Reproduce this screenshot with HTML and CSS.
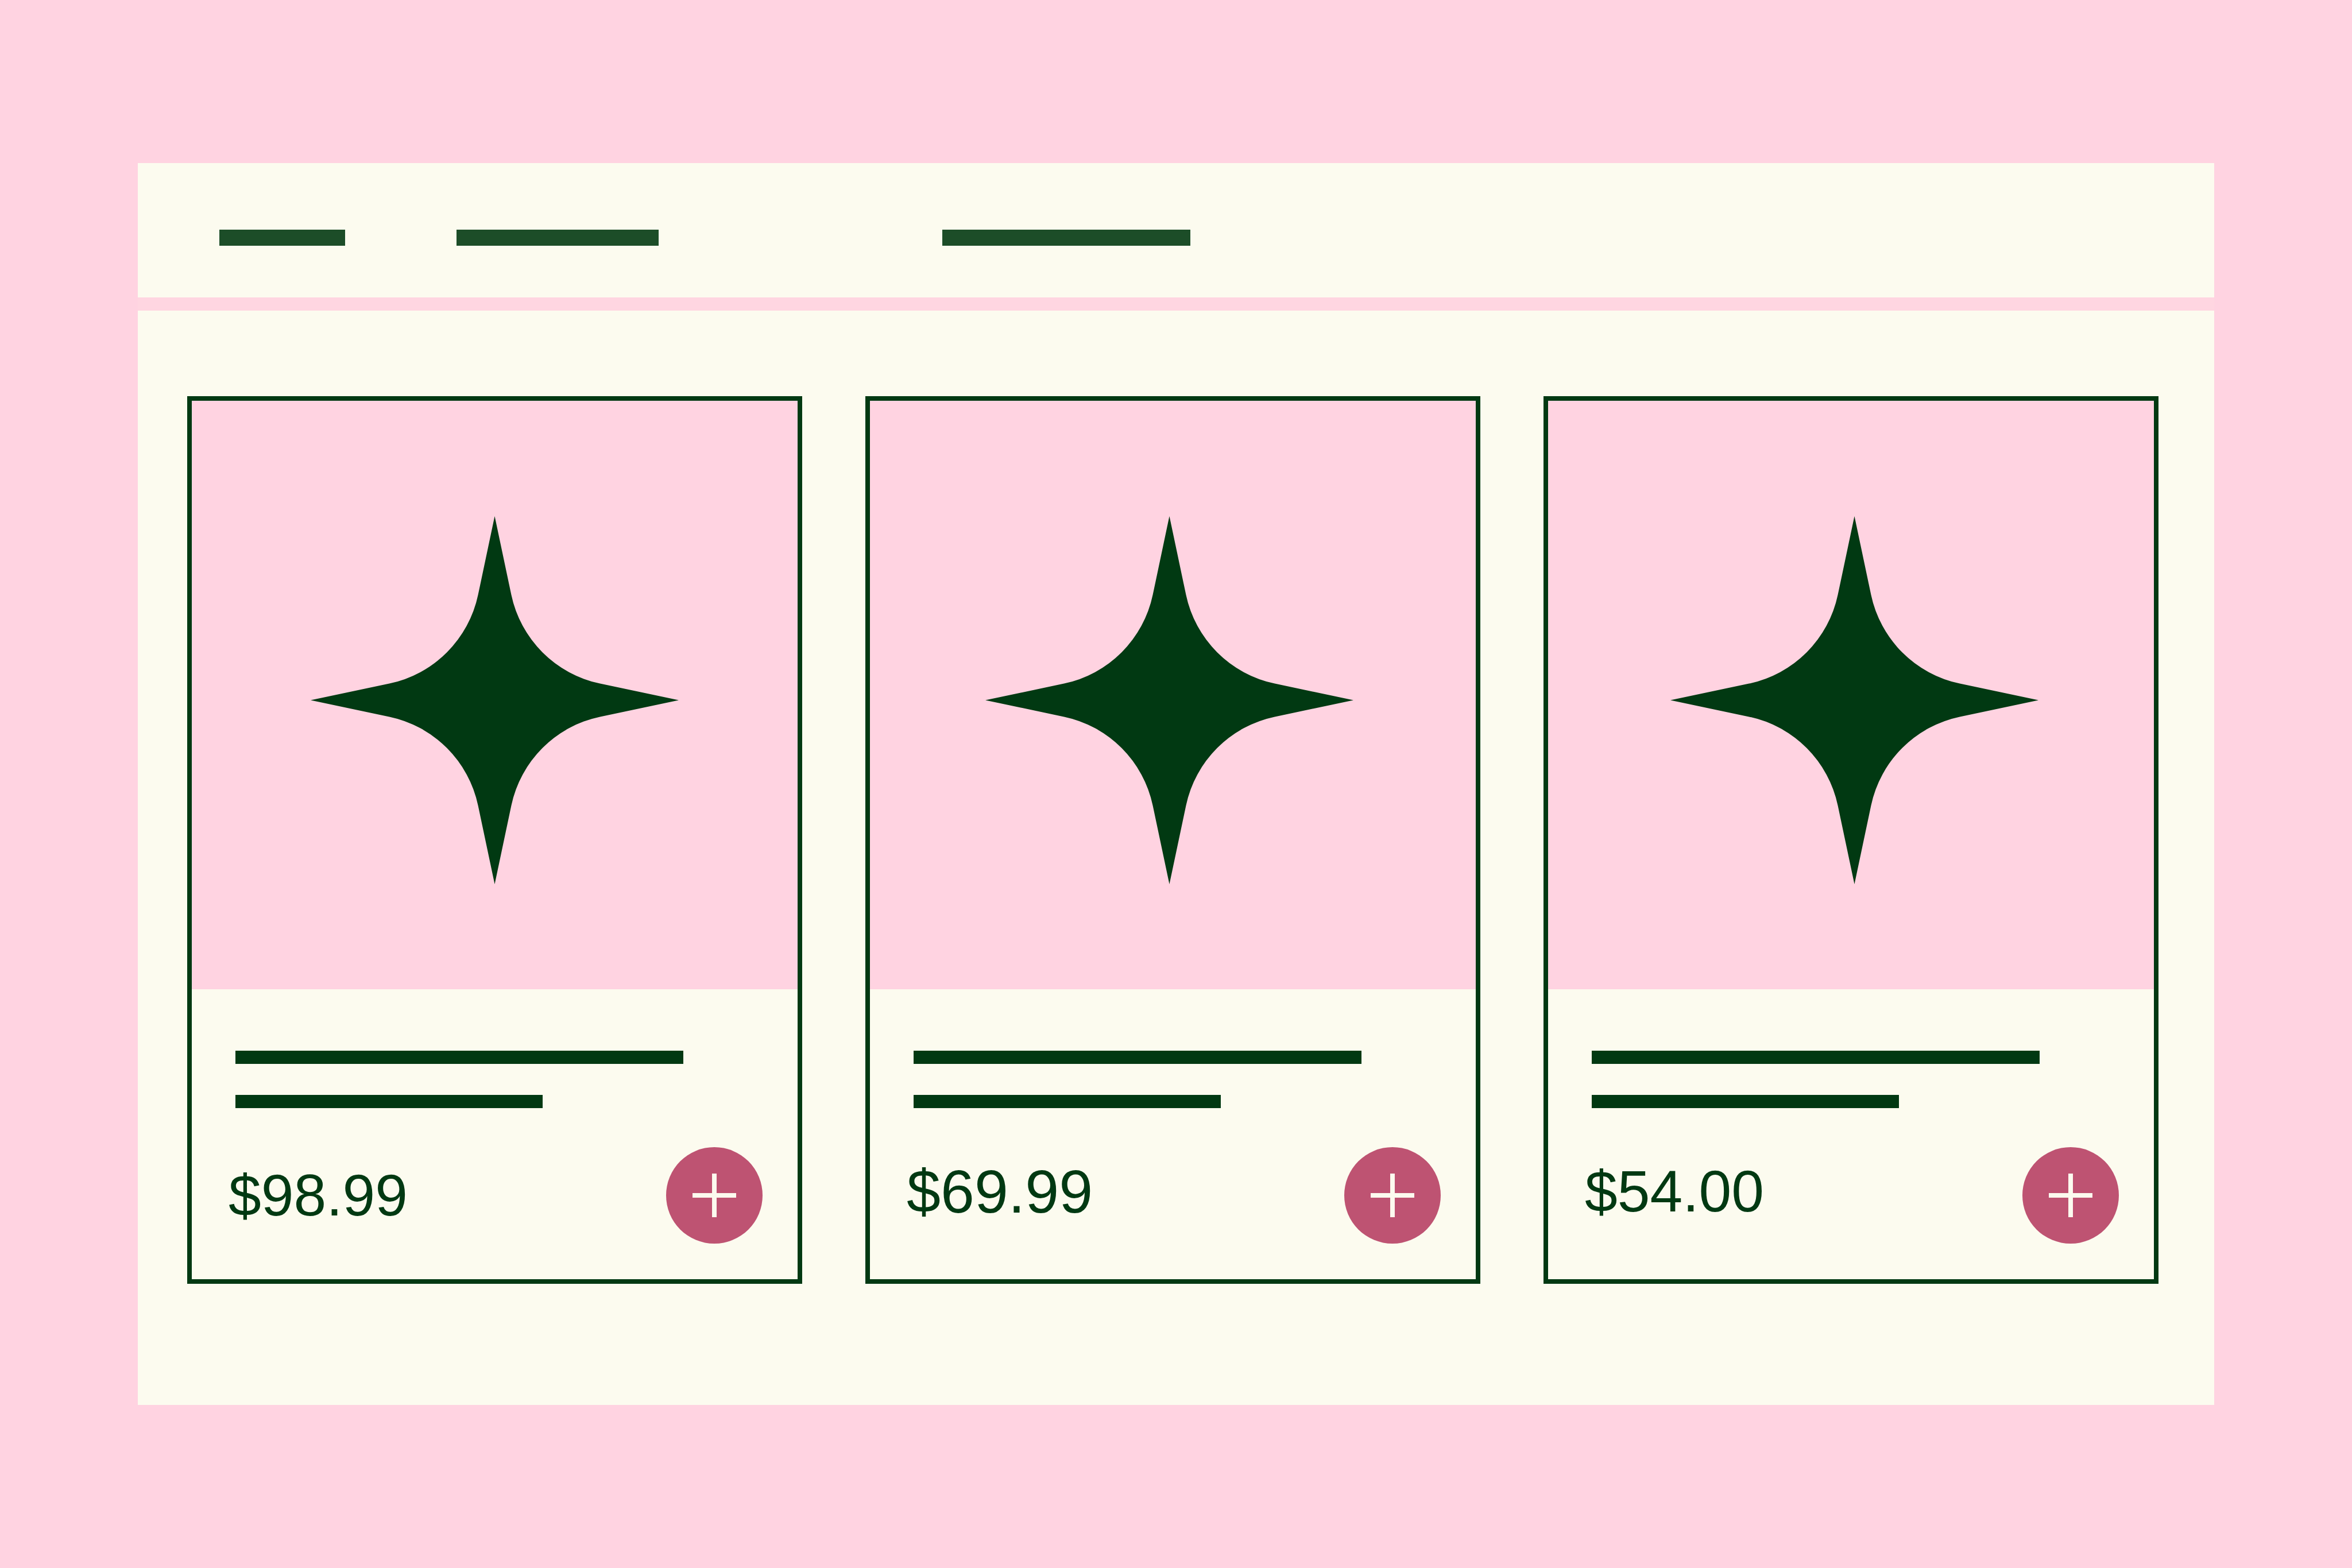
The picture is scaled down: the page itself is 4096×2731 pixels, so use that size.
FILE: index.html
```html
<!DOCTYPE html>
<html lang="en">
<head>
<meta charset="utf-8">
<meta name="viewport" content="width=device-width, initial-scale=1">
<title>Shop</title>
<link rel="stylesheet" href="styles.css">
</head>
<body>
<svg class="sprite" aria-hidden="true">
  <symbol id="star" viewBox="0 0 1473 1473">
    <path d="M736.500 0 L803 315 A460 460 0 0 0 1158 670 L1473 736.500 L1158 803 A460 460 0 0 0 803 1158 L736.500 1473 L670 1158 A460 460 0 0 0 315 803 L0 736.500 L315 670 A460 460 0 0 0 670 315 Z"/>
  </symbol>
  <symbol id="plus" viewBox="0 0 76 76">
    <path d="M34 0h8v34h34v8H42v34h-8V42H0v-8h34z"/>
  </symbol>
</svg>
<div class="window">
  <header class="topbar">
    <span class="tab tab-short"></span>
    <span class="tab tab-medium"></span>
    <span class="tab tab-long"></span>
  </header>
  <main class="products">
    <article class="card">
      <div class="media"><svg class="star"><use href="#star"/></svg></div>
      <div class="info">
        <span class="line line-long"></span>
        <span class="line line-short"></span>
        <div class="buy">
          <span class="price">$98.99</span>
          <button class="add" type="button" aria-label="Add to cart"><svg class="plus"><use href="#plus"/></svg></button>
        </div>
      </div>
    </article>
    <article class="card">
      <div class="media media-left"><svg class="star"><use href="#star"/></svg></div>
      <div class="info">
        <span class="line line-long"></span>
        <span class="line line-short"></span>
        <div class="buy">
          <span class="price price-large price-raised">$69.99</span>
          <button class="add" type="button" aria-label="Add to cart"><svg class="plus"><use href="#plus"/></svg></button>
        </div>
      </div>
    </article>
    <article class="card">
      <div class="media media-right"><svg class="star"><use href="#star"/></svg></div>
      <div class="info">
        <span class="line line-long"></span>
        <span class="line line-short"></span>
        <div class="buy">
          <span class="price price-raised">$54.00</span>
          <button class="add" type="button" aria-label="Add to cart"><svg class="plus"><use href="#plus"/></svg></button>
        </div>
      </div>
    </article>
  </main>
</div>
</body>
</html>
```
FILE: styles.css
```css
:root {
  --pink: #ffd3e1;
  --pink-soft: #ffd6e1;
  --cream: #fcfbef;
  --green: #013912;
  --green-soft: #1c4d28;
  --rose: #be5372;
}

* {
  box-sizing: border-box;
}

body {
  margin: 0;
  padding: 284px 240px;
  background: var(--pink);
  color: var(--green);
  font-family: "Liberation Sans", Arial, sans-serif;
}

.sprite {
  display: none;
}

.window {
  display: flex;
  flex-direction: column;
  gap: 23px;
  background: var(--pink-soft);
}

.topbar {
  display: flex;
  padding: 116px 142px 90px;
  background: var(--cream);
}

.tab {
  height: 28px;
  background: var(--green-soft);
}

.tab-short {
  width: 219px;
  margin-right: 194px;
}

.tab-medium {
  width: 352px;
  margin-right: 494px;
}

.tab-long {
  width: 432px;
}

.products {
  display: grid;
  grid-template-columns: repeat(3, 1fr);
  gap: 110px;
  padding: 149px 97px 211px 86px;
  background: var(--cream);
}

.card {
  border: 8px solid var(--green);
}

.media {
  display: flex;
  align-items: center;
  justify-content: center;
  aspect-ratio: 1055 / 1025;
  padding-top: 18px;
  background: var(--pink);
}

.media-left {
  padding-right: 12px;
}

.media-right {
  padding-left: 12px;
}

.star {
  width: 641px;
  height: 641px;
  fill: var(--green);
}

.info {
  display: flex;
  flex-direction: column;
  padding: 107px 61px 62px;
}

.line {
  height: 23px;
  margin-left: 15px;
  background: var(--green);
}

.line-long {
  width: 780px;
  margin-bottom: 54px;
}

.line-short {
  width: 535px;
}

.buy {
  display: flex;
  align-items: center;
  justify-content: space-between;
  margin-top: 68px;
}

.price {
  margin-left: 3px;
  font-size: 102px;
  line-height: 120px;
}

.price-large {
  font-size: 106px;
}

.price-raised {
  padding-bottom: 14px;
}

.add {
  display: flex;
  align-items: center;
  justify-content: center;
  width: 168px;
  height: 168px;
  padding: 0;
  border: 0;
  border-radius: 50%;
  background: var(--rose);
}

.plus {
  width: 76px;
  height: 76px;
  fill: var(--cream);
}
```
